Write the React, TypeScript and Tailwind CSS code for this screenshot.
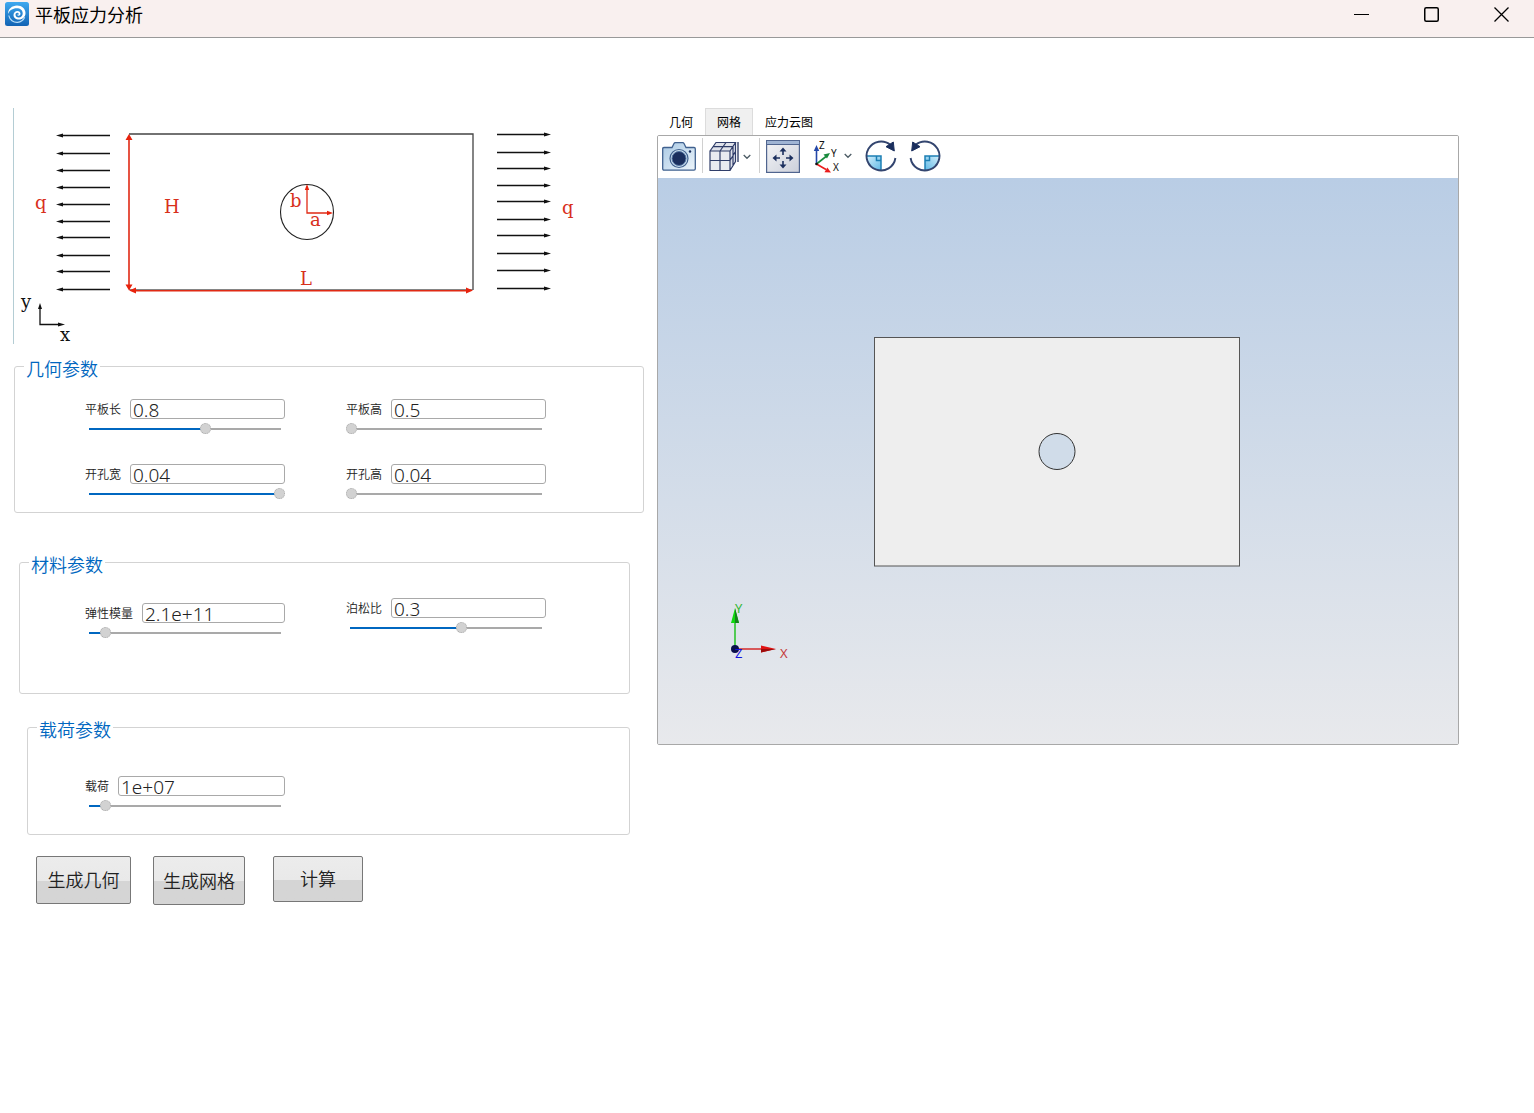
import { useState, type ReactNode } from "react"

const LEFT_ARROWS = [27, 45, 62, 79, 96, 113, 129, 147, 163, 181]
const RIGHT_ARROWS = [26, 44, 60, 77, 93, 111, 127, 145, 162, 180]

function LogoIcon() {
  return (
    <svg width="24" height="24" viewBox="0 0 24 24" aria-hidden="true">
      <defs>
        <linearGradient id="logo" x1="0" y1="0" x2="0" y2="1">
          <stop offset="0" stopColor="#3fa9f0" />
          <stop offset="1" stopColor="#1263b4" />
        </linearGradient>
      </defs>
      <rect width="24" height="24" rx="2.5" fill="url(#logo)" />
      <path
        d="M3 12C3 7 7 3.500 12 3.500c5 0 8.500 3.500 8.500 7.500 0 4-3 6.500-6.500 6.500-3.500 0-5.500-2-5.500-4.500 0-2.300 1.700-4 4-4 1.800 0 3 1.200 3 2.700 0 1.300-1 2-2 2-.9 0-1.500-.5-1.500-1.200 1.300.5 1.800-.1 1.700-.8-.1-.6-.6-.9-1.300-.9-1.200 0-1.900.9-1.900 2 0 1.600 1.300 2.700 3.200 2.700 2.600 0 4-1.800 4-4.200 0-3-2.400-5-6-5C7.500 6.300 4.500 8.500 3 12z"
        fill="#fff"
      />
      <path d="M3.800 13.500c.9 4.500 4.700 7 8.700 6.800 3.500-.2 6-2.300 7.200-5" fill="none" stroke="#b9def8" strokeWidth="1.200" />
    </svg>
  )
}

function TitleBar() {
  return (
    <header className="flex h-[38px] items-start border-b border-[#999] bg-[#f9f0ef] pl-[5px]">
      <div className="flex items-center gap-1.5 pt-[2px]">
        <LogoIcon />
        <h1 className="text-[18px] leading-6 text-black">平板应力分析</h1>
      </div>
      <div className="ml-auto flex gap-[25px] pr-[10px]">
        <button type="button" aria-label="最小化" className="flex h-[29px] w-[45px] items-center justify-center">
          <svg width="15" height="15" viewBox="0 0 15 15">
            <path d="M0 7.500h15" stroke="#000" />
          </svg>
        </button>
        <button type="button" aria-label="最大化" className="flex h-[29px] w-[45px] items-center justify-center">
          <svg width="15" height="15" viewBox="0 0 15 15">
            <rect x=".75" y=".75" width="13.500" height="13.500" rx="1.500" fill="none" stroke="#000" strokeWidth="1.500" />
          </svg>
        </button>
        <button type="button" aria-label="关闭" className="flex h-[29px] w-[45px] items-center justify-center">
          <svg width="15" height="15" viewBox="0 0 15 15">
            <path d="M.5.500l14 14M14.500.500l-14 14" stroke="#000" strokeWidth="1.300" />
          </svg>
        </button>
      </div>
    </header>
  )
}

function LoadDiagram() {
  return (
    <svg
      viewBox="1 0 631 236"
      className="block w-full border-l border-[#b4cdd4] font-['DejaVu_Serif',serif] text-[18px]"
      role="img"
      aria-label="平板受力示意图"
    >
      <g stroke="#111" strokeWidth="1.400">
        {LEFT_ARROWS.map((y) => (
          <g key={y}>
            <path d={`M48 ${y + 0.5}H97`} />
            <path d={`M43 ${y + 0.5}l7-2v4z`} fill="#111" stroke="none" />
          </g>
        ))}
        {RIGHT_ARROWS.map((y) => (
          <g key={y}>
            <path d={`M484 ${y + 0.5}h50`} />
            <path d={`M538 ${y + 0.5}l-7-2v4z`} fill="#111" stroke="none" />
          </g>
        ))}
      </g>
      <path d="M116 26H460V182" fill="none" stroke="#444" strokeWidth="1.300" />
      <path d="M116 181.500H460" stroke="#666" strokeWidth=".8" />
      <ellipse cx="294" cy="104" rx="26.500" ry="27.500" fill="none" stroke="#222" strokeWidth="1.100" />

      <g stroke="#e02a14" strokeWidth="1.600" fill="none">
        <path d="M116 30V178M120 182.700H456" />
        <path d="M294 80V105H316" strokeWidth="1.300" />
      </g>
      <g fill="#e8220c">
        <path d="M116 26l-3.500 6h7zM116 182.500l-3.500-6h7z" />
        <path d="M116 182.500l7-3v6zM460 182.500l-7-3v6z" />
        <path d="M294 76l-2.200 6h4.400zM320 105l-6-2.200v4.400z" />
      </g>
      <g fill="#d8301c">
        <text x="22" y="101">q</text>
        <text x="151" y="105">H</text>
        <text x="277" y="99">b</text>
        <text x="297" y="118">a</text>
        <text x="287" y="177">L</text>
        <text x="549" y="106">q</text>
      </g>

      <path d="M27 200V216.500H47" fill="none" stroke="#111" strokeWidth="1.300" />
      <path d="M27 195l-2 6h4zM52 216.500l-7-2v4z" fill="#111" />
      <text x="8" y="200" fill="#111">y</text>
      <text x="47" y="233" fill="#111">x</text>
    </svg>
  )
}

type FieldProps = { id: string; label: string; value: string; percent: number }

function Field({ id, label, value, percent }: FieldProps) {
  const [text, setText] = useState(value)
  const [pos, setPos] = useState(percent)

  return (
    <div className="w-[200px]">
      <div className="flex h-5 items-center gap-[9px]">
        <label htmlFor={id} className="shrink-0 text-[12px] leading-5 font-[350] text-[#222]">
          {label}
        </label>
        <input
          id={id}
          type="text"
          value={text}
          onChange={(e) => setText(e.target.value)}
          className="h-5 min-w-0 flex-1 rounded-[3px] border border-[#a9a9a9] bg-white pt-[2px] pl-[2px] font-['Noto_Sans',sans-serif] text-[19px] leading-4 font-[350] text-[#222]"
        />
      </div>
      <input
        type="range"
        min={0}
        max={100}
        value={pos}
        aria-label={`${label}滑块`}
        onChange={(e) => setPos(Number(e.target.value))}
        className="mt-1 block h-[11px] w-full appearance-none [&::-webkit-slider-thumb]:size-[11px] [&::-webkit-slider-thumb]:appearance-none [&::-webkit-slider-thumb]:rounded-full [&::-webkit-slider-thumb]:border [&::-webkit-slider-thumb]:border-dotted [&::-webkit-slider-thumb]:border-[#aaa] [&::-webkit-slider-thumb]:bg-[#d2d2d2]"
        style={{
          background: `linear-gradient(to right, #0067c0 ${pos}%, #a9a9a9 ${pos}%) center / calc(100% - 8px) 2px no-repeat`,
        }}
      />
    </div>
  )
}

function Group({ title, className, children }: { title: string; className: string; children: ReactNode }) {
  return (
    <fieldset className={`rounded-[3px] border border-[#d3d3d3] ${className}`}>
      <legend className="ml-[9px] px-[2px] pt-[5px] pb-[2px] text-[18px] leading-[18px] font-[350] text-[#0067c0]">
        {title}
      </legend>
      {children}
    </fieldset>
  )
}

function ActionButton({ className, children }: { className: string; children: ReactNode }) {
  return (
    <button
      type="button"
      className={`rounded-[2px] border border-[#777] bg-linear-to-b from-[#ececec] from-0% via-[#e9e9e9] via-52% to-[#d5d5d5] to-52% pb-[2px] text-[18px] leading-6 font-[350] text-[#222] ${className}`}
    >
      {children}
    </button>
  )
}

function CameraIcon() {
  return (
    <svg width="34" height="30" viewBox="0 0 34 30">
      <defs>
        <linearGradient id="camera" x1="0" y1="0" x2="1" y2="1">
          <stop offset="0" stopColor="#a9c9e4" />
          <stop offset="1" stopColor="#edf5fb" />
        </linearGradient>
      </defs>
      <path
        d="M2 5.500h8l2-4q.4-.8 1.300-.8h7.400q.9 0 1.300.8l2 4h8q1.300 0 1.300 1.300v20q0 1.400-1.300 1.400H2q-1.300 0-1.300-1.400v-20Q.7 5.500 2 5.500z"
        fill="url(#camera)"
        stroke="#40618f"
        strokeWidth="1.300"
      />
      <circle cx="17" cy="16.500" r="9" fill="#c9dcec" stroke="#40618f" strokeWidth="1.200" />
      <circle cx="17" cy="16.500" r="7" fill="#1b2f5e" stroke="#5577a5" />
      <circle cx="28" cy="9.500" r="1.200" fill="#1b2f5e" />
    </svg>
  )
}

function MeshIcon() {
  return (
    <svg width="30" height="31" viewBox="0 0 30 31">
      <path d="M1 10L7 1.500h20v18L21 29.500H1z" fill="#dfe2ea" />
      <path d="M1 10h20v19.500H1z" fill="#e9ebf1" />
      <path
        d="M1 10h20v19.500H1zM11 10v19.500M1 19.500h20M1 10L7 1.500h19.500L21 10M11 10l6-8.500M4 5.700h19.500M21 19.500l5.500-9M21 29.500l5.500-9v-19M24 6V24"
        fill="none"
        stroke="#2f3d69"
        strokeWidth="1.200"
      />
      <path d="M29 1v20" stroke="#25325c" strokeWidth="1.300" />
    </svg>
  )
}

function ChevronIcon() {
  return (
    <svg width="8" height="6" viewBox="0 0 8 6">
      <path d="M.7 1L4 4.300 7.300 1" fill="none" stroke="#4e5d66" strokeWidth="1.300" />
    </svg>
  )
}

function FitIcon() {
  return (
    <svg width="34" height="33" viewBox="0 0 34 33">
      <defs>
        <linearGradient id="fit" x1="0" y1="0" x2="1" y2="1">
          <stop offset="0" stopColor="#f3f4f7" />
          <stop offset="1" stopColor="#ccd0da" />
        </linearGradient>
      </defs>
      <rect x=".6" y=".6" width="32.800" height="31.800" fill="url(#fit)" stroke="#50658f" strokeWidth="1.200" />
      <path d="M1 1h32v3H1z" fill="#9fb4d4" />
      <path d="M1 4.500h32" stroke="#50658f" />
      <g fill="#1b2f5e">
        <path d="M17 7.500l3.500 4h-7zM17 28.500l3.500-4h-7zM6.500 18l4-3.500v7zM27.500 18l-4-3.500v7z" />
        <path d="M16.200 11h1.600v4h-1.600zM16.200 21h1.600v4h-1.600zM10 17.200h4v1.600h-4zM20 17.200h4v1.600h-4z" />
      </g>
    </svg>
  )
}

function AxesIcon() {
  return (
    <svg width="28" height="36" viewBox="0 0 28 36" className="font-['Noto_Sans',sans-serif] text-[10px]">
      <path d="M4.500 26V11" stroke="#2447a8" strokeWidth="1.600" />
      <path d="M4.500 7L1.800 13h5.400z" fill="#2447a8" />
      <path d="M4.500 26L14 18.500" stroke="#178a3c" strokeWidth="1.600" />
      <path d="M18 15l-6.500 1.500 3.500 4z" fill="#178a3c" />
      <path d="M4.500 26L14 31.500" stroke="#ea1c1c" strokeWidth="1.600" />
      <path d="M19 34.500l-6.500-.3 2.800-4.700z" fill="#ea1c1c" />
      <circle cx="4.500" cy="26" r="1.300" fill="#111" />
      <g fill="#111">
        <text x="7" y="11">Z</text>
        <text x="19" y="19">Y</text>
        <text x="21" y="33">X</text>
      </g>
    </svg>
  )
}

function RotateIcon({ flipped = false }: { flipped?: boolean }) {
  return (
    <svg width="32" height="32" viewBox="0 0 32 32" className={flipped ? "-scale-x-100" : ""}>
      <defs>
        <linearGradient id="quarter" x1="0" y1="0" x2="1" y2="1">
          <stop offset="0" stopColor="#d4effb" />
          <stop offset="1" stopColor="#5fb9e6" />
        </linearGradient>
      </defs>
      <path d="M1.500 16H16v14.500A14.500 14.500 0 0 1 1.500 16z" fill="url(#quarter)" />
      <path d="M1.500 16H16v14.500M11.500 16v4.500H16" fill="none" stroke="#1c7fb4" strokeWidth="1.500" />
      <path d="M30.400 18A14.500 14.500 0 1 1 25.500 5" fill="none" stroke="#33456f" strokeWidth="1.900" />
      <path d="M28.300 2l1 9-8.300-4.300z" fill="#1b2f5e" stroke="#1b2f5e" strokeLinejoin="round" />
    </svg>
  )
}

function Viewport() {
  return (
    <svg viewBox="0 0 800 566" className="block w-full font-['Noto_Sans',sans-serif] text-[13px]" role="img" aria-label="网格视图">
      <defs>
        <linearGradient id="sky" x1="0" y1="0" x2="0" y2="1">
          <stop offset="0" stopColor="#b9cde5" />
          <stop offset="1" stopColor="#e8e9ec" />
        </linearGradient>
      </defs>
      <rect width="800" height="566" fill="url(#sky)" />
      <rect x="216.500" y="159.500" width="365" height="228.500" fill="#eee" stroke="#555" />
      <circle cx="399" cy="273.500" r="18" fill="#d0dce9" stroke="#333" />

      <path d="M77 471v-28" stroke="#2fc42f" strokeWidth="1.600" />
      <path d="M77 430l-4 15h8z" fill="#0fd80f" />
      <path d="M77 430v15h4z" fill="#14841a" />
      <path d="M77 471h28" stroke="#d42a2a" strokeWidth="1.600" />
      <path d="M118 471l-15-3.500v7z" fill="#e01212" />
      <path d="M118 471h-15v3.500z" fill="#9c0c0c" />
      <circle cx="77" cy="471" r="4" fill="#0a0f4a" />
      <text x="77" y="435" fill="#35b835">Y</text>
      <text x="122" y="480" fill="#c43c3c">X</text>
      <text x="77" y="480" fill="#1010e0">Z</text>
    </svg>
  )
}

function Toolbar() {
  return (
    <div className="flex h-[42px] items-start bg-white pt-[2px] pl-1">
      <button type="button" aria-label="截图" className="pt-[4px]">
        <CameraIcon />
      </button>
      <span className="mr-1.5 ml-1.5 h-[35px] w-px bg-[#d0d0d0]" />
      <button type="button" aria-label="显示模式" className="flex items-center gap-1 pt-[3px]">
        <MeshIcon />
        <ChevronIcon />
      </button>
      <span className="mr-1.5 ml-2 h-[35px] w-px bg-[#d0d0d0]" />
      <button type="button" aria-label="适应窗口" className="pt-[2px]">
        <FitIcon />
      </button>
      <button type="button" aria-label="视图方向" className="ml-3 flex items-center gap-1">
        <AxesIcon />
        <ChevronIcon />
      </button>
      <button type="button" aria-label="顺时针旋转" className="ml-[13px] pt-[2px]">
        <RotateIcon />
      </button>
      <button type="button" aria-label="逆时针旋转" className="ml-3 pt-[2px]">
        <RotateIcon flipped />
      </button>
    </div>
  )
}

function ResultPanel() {
  const [active, setActive] = useState("网格")

  return (
    <section className="min-w-0 flex-1">
      <div role="tablist" className="flex">
        {["几何", "网格", "应力云图"].map((tab) => (
          <button
            key={tab}
            type="button"
            role="tab"
            aria-selected={tab === active}
            onClick={() => setActive(tab)}
            className={`h-[27px] border border-b-0 px-[11px] text-[12px] leading-6 text-black ${
              tab === active ? "border-[#dcdcdc] bg-[#f0f0f0]" : "border-transparent"
            }`}
          >
            {tab}
          </button>
        ))}
      </div>
      <div className="overflow-hidden rounded-[2px] border border-[#a8a8a8]">
        <Toolbar />
        <Viewport />
      </div>
    </section>
  )
}

export default function App() {
  return (
    <div className="min-h-screen bg-white font-['Noto_Sans_CJK_SC',sans-serif]">
      <TitleBar />
      <main className="flex items-start gap-3 pt-[70px] pr-[75px] pb-12 pl-[13px]">
        <form className="w-[632px] shrink-0">
          <LoadDiagram />

          <Group title="几何参数" className="mt-[10px] mr-px ml-px pb-[13px]">
            <div className="grid grid-cols-[261px_auto] gap-y-[30px] pt-5 pl-[70px]">
              <Field id="length" label="平板长" value="0.8" percent={61} />
              <Field id="height" label="平板高" value="0.5" percent={0} />
              <Field id="hole-width" label="开孔宽" value="0.04" percent={100} />
              <Field id="hole-height" label="开孔高" value="0.04" percent={0} />
            </div>
          </Group>

          <Group title="材料参数" className="mt-[37px] mr-[15px] ml-1.5 pb-[55px]">
            <div className="grid grid-cols-[261px_auto] pt-[23px] pl-[65px]">
              <div className="pt-[5px]">
                <Field id="modulus" label="弹性模量" value="2.1e+11" percent={8} />
              </div>
              <Field id="poisson" label="泊松比" value="0.3" percent={58} />
            </div>
          </Group>

          <Group title="载荷参数" className="mt-[21px] mr-[15px] ml-3.5 pb-[23px]">
            <div className="pt-9 pl-[57px]">
              <Field id="load" label="载荷" value="1e+07" percent={8} />
            </div>
          </Group>

          <div className="mt-[21px] flex items-start pl-[23px]">
            <ActionButton className="h-12 w-[95px]">生成几何</ActionButton>
            <ActionButton className="ml-[22px] h-[49px] w-[92px]">生成网格</ActionButton>
            <ActionButton className="ml-7 h-[46px] w-[90px]">计算</ActionButton>
          </div>
        </form>

        <ResultPanel />
      </main>
    </div>
  )
}
